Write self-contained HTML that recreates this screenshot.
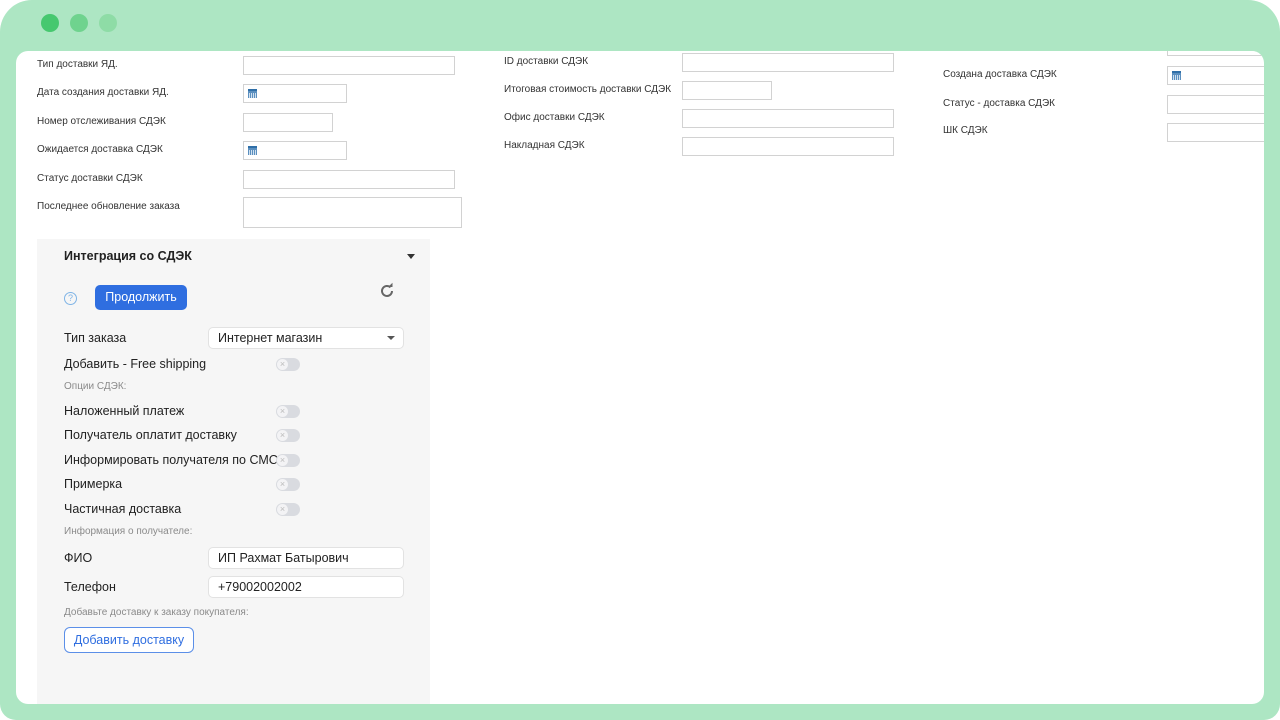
<!DOCTYPE html>
<html><head><meta charset="utf-8"><style>
*{box-sizing:border-box;margin:0;padding:0}
body{width:1280px;height:720px;background:#fff;position:relative;overflow:hidden;font-family:"Liberation Sans",sans-serif}
.frame{position:absolute;left:0;top:0;width:1280px;height:720px;background:#ade6c3;border-radius:32px 32px 16px 16px}
.dot{position:absolute;top:14px;width:18px;height:18px;border-radius:50%}
.win{position:absolute;left:16px;top:51px;width:1248px;height:653px;background:#fff;border-radius:12px;overflow:hidden}
.l{position:absolute;font-size:10px;color:#333}
.i{position:absolute;border:1px solid #d2d2d2;height:19px;background:#fff}
.cal{position:absolute;left:4px;top:4px;width:9px;height:9px;background:#5b8fbf;border-top:2px solid #2f6fa8}
.cal:after{content:"";position:absolute;left:1px;top:2px;width:7px;height:5px;background:repeating-linear-gradient(90deg,#cfe0ef 0 1px,transparent 1px 2px)}
.panel{position:absolute;left:21px;top:188px;width:393px;height:470px;background:#f6f6f6}
.p{position:absolute;font-size:12.5px;color:#222;font-family:"Liberation Sans",sans-serif}
.s{position:absolute;font-size:10px;color:#8a8a8a;font-family:"Liberation Sans",sans-serif}
.tg{position:absolute;left:239px;width:24px;height:13px;border-radius:7px;background:#d9dbe0}
.tg:after{content:"×";position:absolute;left:1px;top:1px;width:11px;height:11px;border-radius:50%;background:#f3f3f5;color:#bbb;font-size:9px;line-height:11px;text-align:center}
.fi{position:absolute;left:171px;width:196px;height:22px;background:#fff;border:1px solid #e2e2e2;border-radius:5px;font-size:12.5px;padding:3px 9px;color:#222;font-family:"Liberation Sans",sans-serif}
</style></head><body>
<div class="frame">
<div class="dot" style="left:41px;background:#46c86f"></div>
<div class="dot" style="left:70px;background:#6fd38e"></div>
<div class="dot" style="left:99px;background:#8edca6"></div>
</div>
<div class="win">
<div class="l" style="left:21px;top:8px">Тип доставки ЯД.</div><div class="i" style="left:227px;top:5px;width:212px"></div>
<div class="l" style="left:21px;top:36px">Дата создания доставки ЯД.</div><div class="i" style="left:227px;top:33px;width:104px"><div class="cal"></div></div>
<div class="l" style="left:21px;top:65px">Номер отслеживания СДЭК</div><div class="i" style="left:227px;top:62px;width:90px"></div>
<div class="l" style="left:21px;top:93px">Ожидается доставка СДЭК</div><div class="i" style="left:227px;top:90px;width:104px"><div class="cal"></div></div>
<div class="l" style="left:21px;top:122px">Статус доставки СДЭК</div><div class="i" style="left:227px;top:119px;width:212px"></div>
<div class="l" style="left:21px;top:150px">Последнее обновление заказа</div><div class="i" style="left:227px;top:146px;width:219px;height:31px"></div>

<div class="l" style="left:488px;top:5px">ID доставки СДЭК</div><div class="i" style="left:666px;top:2px;width:212px"></div>
<div class="l" style="left:488px;top:33px">Итоговая стоимость доставки СДЭК</div><div class="i" style="left:666px;top:30px;width:90px"></div>
<div class="l" style="left:488px;top:61px">Офис доставки СДЭК</div><div class="i" style="left:666px;top:58px;width:212px"></div>
<div class="l" style="left:488px;top:89px">Накладная СДЭК</div><div class="i" style="left:666px;top:86px;width:212px"></div>

<div class="i" style="left:1151px;top:-14px;width:120px"></div>
<div class="l" style="left:927px;top:18px">Создана доставка СДЭК</div><div class="i" style="left:1151px;top:15px;width:120px"><div class="cal"></div></div>
<div class="l" style="left:927px;top:47px">Статус - доставка СДЭК</div><div class="i" style="left:1151px;top:44px;width:120px"></div>
<div class="l" style="left:927px;top:74px">ШК СДЭК</div><div class="i" style="left:1151px;top:72px;width:120px"></div>

<div class="panel">
<div class="p" style="left:27px;top:10px;font-weight:bold">Интеграция со СДЭК</div>
<div style="position:absolute;left:370px;top:15px;border-left:4px solid transparent;border-right:4px solid transparent;border-top:5px solid #333"></div>
<div style="position:absolute;left:27px;top:53px;width:13px;height:13px;border:1px solid #7fb4e6;border-radius:50%;font-size:9px;color:#7fb4e6;text-align:center;line-height:11px">?</div>
<div style="position:absolute;left:58px;top:46px;width:92px;height:25px;background:#2f6ee0;border-radius:5px;color:#fff;font-size:12.5px;text-align:center;line-height:25px">Продолжить</div>
<svg style="position:absolute;left:341px;top:43px" width="18" height="18" viewBox="0 0 18 18"><path d="M14 9a5 5 0 1 1-1.5-3.6" fill="none" stroke="#666" stroke-width="2"/><path d="M10 5h4.5V0.8z" fill="#666"/></svg>
<div class="p" style="left:27px;top:92px">Тип заказа</div>
<div class="fi" style="top:88px">Интернет магазин<div style="position:absolute;right:8px;top:8px;border-left:4px solid transparent;border-right:4px solid transparent;border-top:4px solid #555"></div></div>
<div class="p" style="left:27px;top:118px">Добавить - Free shipping</div><div class="tg" style="top:119px"></div>
<div class="s" style="left:27px;top:142px">Опции СДЭК:</div>
<div class="p" style="left:27px;top:165px">Наложенный платеж</div><div class="tg" style="top:166px"></div>
<div class="p" style="left:27px;top:189px">Получатель оплатит доставку</div><div class="tg" style="top:190px"></div>
<div class="p" style="left:27px;top:214px">Информировать получателя по СМС</div><div class="tg" style="top:215px"></div>
<div class="p" style="left:27px;top:238px">Примерка</div><div class="tg" style="top:239px"></div>
<div class="p" style="left:27px;top:263px">Частичная доставка</div><div class="tg" style="top:264px"></div>
<div class="s" style="left:27px;top:287px">Информация о получателе:</div>
<div class="p" style="left:27px;top:312px">ФИО</div><div class="fi" style="top:308px">ИП Рахмат Батырович</div>
<div class="p" style="left:27px;top:341px">Телефон</div><div class="fi" style="top:337px">+79002002002</div>
<div class="s" style="left:27px;top:368px">Добавьте доставку к заказу покупателя:</div>
<div style="position:absolute;left:27px;top:388px;width:130px;height:26px;border:1px solid #5b8fe8;border-radius:6px;background:#fff;color:#2f6ee0;font-size:12.5px;text-align:center;line-height:24px">Добавить доставку</div>
</div>
</div>
</body></html>
